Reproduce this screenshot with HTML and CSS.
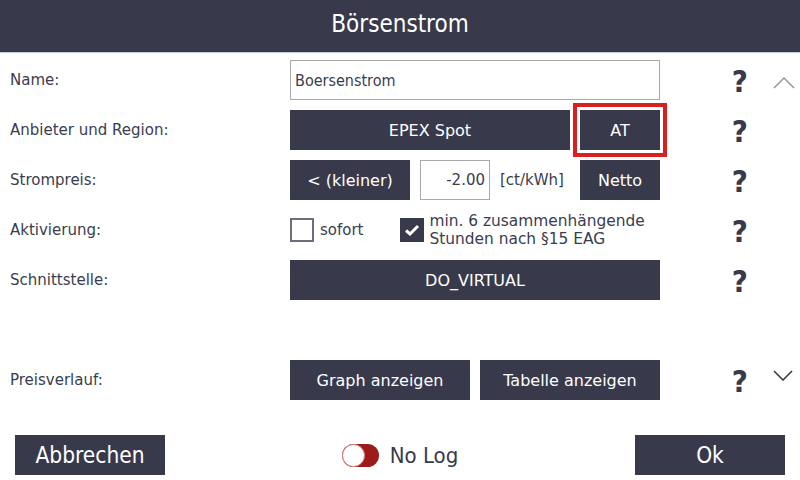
FILE: index.html
```html
<!DOCTYPE html>
<html lang="de">
<head>
    <meta charset="UTF-8">
    <meta name="viewport" content="width=device-width, initial-scale=1.0">
    <title>Börsenstrom</title>
    <link rel="stylesheet" href="styles.css">
</head>
<body>

    <div class="kopf">
        <h1>Börsenstrom</h1>
    </div>

    <div class="formular">
        <div class="zeile">
            <span class="label">Name:</span>
            <div class="feld">
                <input class="eingabe-name" type="text" value="Boersenstrom">
            </div>
            <span class="hilfe">?</span>
            <span class="pfeil hoch">
                <svg width="22" height="14" viewBox="0 0 22 14"><polyline points="1,12 11,2 21,12" fill="none" stroke="#8d928e" stroke-width="1.4"/></svg>
            </span>
        </div>

        <div class="zeile">
            <span class="label">Anbieter und Region:</span>
            <div class="feld">
                <button class="knopf breit">EPEX Spot</button>
                <button class="knopf klein markiert">AT</button>
            </div>
            <span class="hilfe">?</span>
            <span class="pfeil"></span>
        </div>

        <div class="zeile">
            <span class="label">Strompreis:</span>
            <div class="feld">
                <button class="knopf vergleich">&lt; (kleiner)</button>
                <input class="eingabe-preis" type="text" value="-2.00">
                <span class="einheit">[ct/kWh]</span>
                <button class="knopf klein rechts">Netto</button>
            </div>
            <span class="hilfe">?</span>
            <span class="pfeil"></span>
        </div>

        <div class="zeile">
            <span class="label">Aktivierung:</span>
            <div class="feld">
                <span class="kasten"></span>
                <span class="kasten-text">sofort</span>
                <span class="kasten an">
                    <svg width="16" height="14" viewBox="0 0 16 14"><polyline points="2,7.5 6,11 14,3" fill="none" stroke="#fff" stroke-width="3"/></svg>
                </span>
                <span class="kasten-text zweizeilig">min. 6 zusammenhängende<br>Stunden nach §15 EAG</span>
            </div>
            <span class="hilfe">?</span>
            <span class="pfeil"></span>
        </div>

        <div class="zeile">
            <span class="label">Schnittstelle:</span>
            <div class="feld">
                <button class="knopf voll">DO_VIRTUAL</button>
            </div>
            <span class="hilfe">?</span>
            <span class="pfeil"></span>
        </div>

        <div class="zeile leer"></div>

        <div class="zeile">
            <span class="label">Preisverlauf:</span>
            <div class="feld">
                <button class="knopf halb">Graph anzeigen</button>
                <button class="knopf halb">Tabelle anzeigen</button>
            </div>
            <span class="hilfe">?</span>
            <span class="pfeil runter">
                <svg width="20" height="12" viewBox="0 0 20 12"><polyline points="1,2 10,11 19,2" fill="none" stroke="#383a4c" stroke-width="1.6"/></svg>
            </span>
        </div>
    </div>

    <div class="fuss">
        <button class="knopf fuss-knopf">Abbrechen</button>
        <div class="schalter-gruppe">
            <span class="schalter"><span class="schalter-punkt"></span></span>
            <span class="schalter-text">No Log</span>
        </div>
        <button class="knopf fuss-knopf">Ok</button>
    </div>

</body>
</html>
```

FILE: styles.css
```css
body {
    margin: 0;
    background-color: #ffffff;
    font-family: 'DejaVu Sans', sans-serif;
    color: #3a3d50;
    width: 800px;
    height: 480px;
    overflow: hidden;
}

.kopf {
    height: 52px;
    background-color: #383a4c;
    border-bottom: 1px solid #c9cbd3;
    display: flex;
    justify-content: center;
    align-items: center;
}

.kopf h1 {
    margin: 0 0 5px 0;
    font-family: 'DejaVu Sans Condensed', 'DejaVu Sans', sans-serif;
    font-weight: normal;
    font-size: 24px;
    color: #ffffff;
}

.formular {
    padding-top: 2px;
}

.zeile {
    display: grid;
    grid-template-columns: 290px 370px 1fr 40px;
    align-items: center;
    height: 50px;
}

.label {
    padding-left: 10px;
    font-size: 15px;
}

.feld {
    display: flex;
    align-items: center;
    gap: 10px;
}

.hilfe {
    text-align: right;
    padding-right: 12px;
    font-family: 'DejaVu Sans Condensed', 'DejaVu Sans', sans-serif;
    font-weight: bold;
    font-size: 31px;
    color: #383a4c;
    line-height: 1;
    padding-top: 2px;
}

.pfeil {
    display: flex;
    padding-left: 13px;
}

.hoch {
    padding-top: 6px;
}

.runter {
    padding-bottom: 10px;
}

.knopf {
    height: 40px;
    border: none;
    background-color: #383a4c;
    color: #ffffff;
    font-family: 'DejaVu Sans', sans-serif;
    font-size: 16px;
    padding: 0;
}

.breit {
    width: 280px;
}

.klein {
    width: 80px;
}

.markiert {
    outline: 4px solid #d9201f;
    outline-offset: 3px;
}

.vergleich {
    width: 120px;
}

.rechts {
    margin-left: auto;
}

.voll {
    width: 370px;
}

.halb {
    width: 180px;
}

.eingabe-name {
    width: 370px;
    height: 40px;
    box-sizing: border-box;
    border: 1px solid #a9a9a9;
    padding: 0 4px;
    font-family: 'DejaVu Sans Condensed', 'DejaVu Sans', sans-serif;
    font-size: 16px;
    color: #3a3d50;
}

.eingabe-preis {
    width: 70px;
    height: 40px;
    box-sizing: border-box;
    border: 1px solid #a9a9a9;
    padding: 0 4px;
    text-align: right;
    font-family: 'DejaVu Sans', sans-serif;
    font-size: 15px;
    color: #3a3d50;
}

.einheit {
    font-size: 15px;
    color: #3a3d50;
}

.kasten {
    width: 24px;
    height: 24px;
    box-sizing: border-box;
    border: 2px solid #6b6e7c;
    display: flex;
    align-items: center;
    justify-content: center;
}

.kasten.an {
    background-color: #383a4c;
    border-color: #383a4c;
    margin-left: 26px;
}

.kasten-text {
    font-size: 15px;
    margin-left: -4px;
}

.zweizeilig {
    font-size: 15.4px;
    line-height: 18px;
    margin-left: -4px;
}

.leer {
    height: 50px;
}

.fuss {
    display: flex;
    justify-content: space-between;
    align-items: center;
    padding: 0 15px;
    margin-top: 30px;
}

.fuss-knopf {
    width: 150px;
    font-family: 'DejaVu Sans Condensed', 'DejaVu Sans', sans-serif;
    font-size: 22.5px;
}

.schalter-gruppe {
    display: flex;
    align-items: center;
    gap: 11px;
}

.schalter {
    width: 37px;
    height: 23px;
    border-radius: 12px;
    background-color: #9d1b1b;
    display: flex;
    align-items: center;
}

.schalter-punkt {
    width: 21px;
    height: 21px;
    border-radius: 50%;
    background-color: #ffffff;
    border: 1px solid #d08a89;
}

.schalter-text {
    font-family: 'DejaVu Sans Condensed', 'DejaVu Sans', sans-serif;
    font-size: 22px;
    color: #383a4c;
}
```
